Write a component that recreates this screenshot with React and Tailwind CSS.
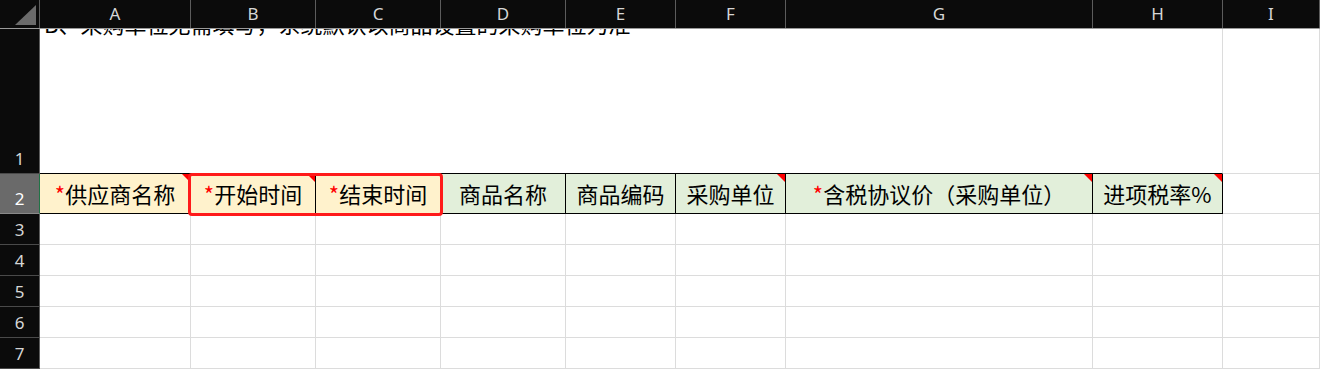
const cols = [
  { key: "A", w: "w-[151px]" },
  { key: "B", w: "w-[125px]" },
  { key: "C", w: "w-[125px]" },
  { key: "D", w: "w-[125px]" },
  { key: "E", w: "w-[110px]" },
  { key: "F", w: "w-[110px]" },
  { key: "G", w: "w-[307px]" },
  { key: "H", w: "w-[130px]" },
  { key: "I", w: "flex-1" },
];

const headers = [
  { label: "供应商名称", req: true, bg: "bg-[#fff2cc]", note: true },
  { label: "开始时间", req: true, bg: "bg-[#fff2cc]", note: true },
  { label: "结束时间", req: true, bg: "bg-[#fff2cc]", note: false },
  { label: "商品名称", req: false, bg: "bg-[#e2efda]", note: false },
  { label: "商品编码", req: false, bg: "bg-[#e2efda]", note: false },
  { label: "采购单位", req: false, bg: "bg-[#e2efda]", note: true },
  { label: "含税协议价（采购单位）", req: true, bg: "bg-[#e2efda]", note: true },
  { label: "进项税率%", req: false, bg: "bg-[#e2efda]", note: true },
];

function RowHead({ n, h, active }) {
  return (
    <div
      className={`w-[40px] shrink-0 ${h} flex items-end justify-center pb-[2px] border-b border-r text-[17px] leading-[24px] ${
        active ? "bg-[#6a6a6a] text-white border-r-[#217346] border-b-[#8a8a8a]" : "bg-[#0b0b0b] text-[#d6d6d6] border-r-[#5c5c5c] border-b-[#4a4a4a]"
      }`}
    >
      {n}
    </div>
  );
}

function EmptyRow({ n }) {
  return (
    <div className="flex h-[31px]">
      <RowHead n={n} h="h-[31px]" />
      {cols.map((c) => (
        <div key={c.key} className={`${c.w} shrink-0 h-full border-r border-b border-[#dcdcdc]`} />
      ))}
    </div>
  );
}

export default function App() {
  return (
    <div className="relative w-[1320px] h-[369px] overflow-hidden bg-white font-['Noto_Sans','Noto_Sans_CJK_SC',sans-serif]">
      {/* column letters */}
      <div className="relative z-10 flex h-[29px] bg-[#0b0b0b] border-b border-[#9a9a9a]">
        <div className="relative w-[40px] shrink-0 border-r border-[#5c5c5c]">
          <div className="absolute left-[15px] top-[5px] w-0 h-0 border-l-[21px] border-l-transparent border-b-[20px] border-b-[#6b6b6b]" />
        </div>
        {cols.map((c) => (
          <div key={c.key} className={`${c.w} shrink-0 flex items-center justify-center border-r border-[#5c5c5c] text-[17px] text-[#d6d6d6]`}>
            {c.key}
          </div>
        ))}
      </div>

      {/* row 1: merged note cell, scrolled so only the tail of the text shows */}
      <div className="flex h-[145px]">
        <RowHead n={1} h="h-[145px]" />
        <div className="w-[1183px] shrink-0 h-full overflow-hidden border-r border-[#dcdcdc] border-b border-b-black">
          <p className="mt-[-20px] pl-[4px] text-[22px] leading-[28px] text-black font-['Noto_Sans_CJK_SC',sans-serif] whitespace-nowrap">
            B、采购单位无需填写，系统默认以商品设置的采购单位为准
          </p>
        </div>
        <div className="flex-1 h-full border-r border-b border-[#dcdcdc]" />
      </div>

      {/* row 2: column titles */}
      <div className="flex h-[40px]">
        <RowHead n={2} h="h-[40px]" active />
        {headers.map((h, i) => (
          <div
            key={h.label}
            className={`relative ${cols[i].w} shrink-0 h-full flex items-center justify-center border-r border-b border-black ${h.bg} text-[22px] text-black font-['Noto_Sans_CJK_SC',sans-serif] whitespace-nowrap`}
          >
            {h.req && <span className="text-[#ff0000]">*</span>}
            {h.label}
            {h.note && (
              <span className="absolute right-0 top-0 w-0 h-0 border-l-[8px] border-l-transparent border-t-[8px] border-t-[#ff0000]" />
            )}
          </div>
        ))}
        <div className="flex-1 h-full border-r border-b border-[#dcdcdc]" />
      </div>

      {[3, 4, 5, 6, 7].map((n) => (
        <EmptyRow key={n} n={n} />
      ))}

      {/* selection highlight over B2:C2 */}
      <div className="absolute left-[188px] top-[173px] w-[255px] h-[43px] border-[3px] border-[#ff1a1a] rounded-[4px]" />
    </div>
  );
}
